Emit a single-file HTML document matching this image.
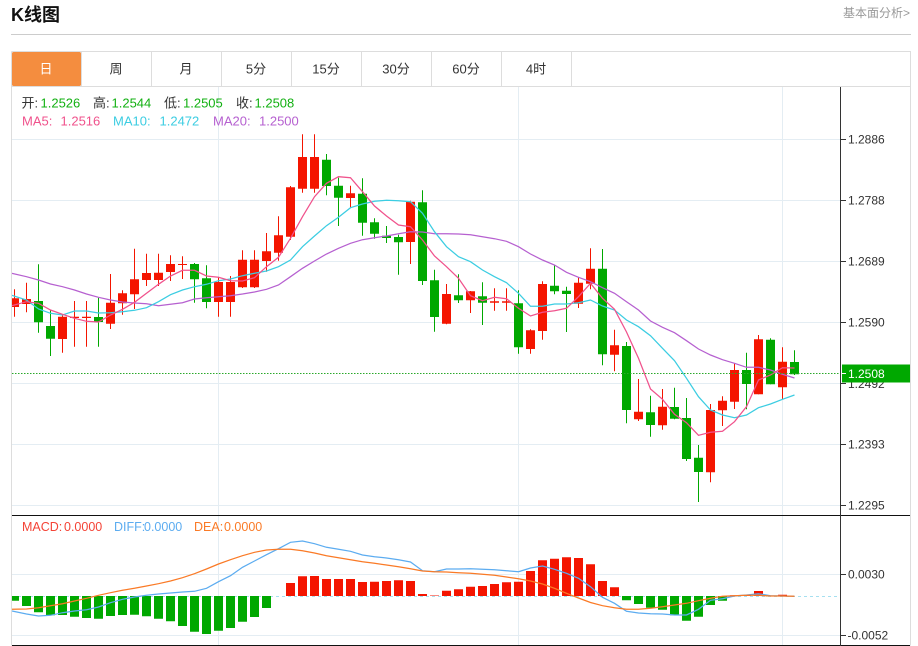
<!DOCTYPE html>
<html lang="zh">
<head>
<meta charset="utf-8">
<title>K线图</title>
<style>
html,body{margin:0;padding:0;background:#fff;width:918px;height:646px;overflow:hidden}
svg{display:block;font-family:"Liberation Sans","Noto Sans CJK SC",sans-serif}
</style>
</head>
<body>
<svg width="918" height="646" viewBox="0 0 918 646" xmlns="http://www.w3.org/2000/svg">
<defs>
<clipPath id="c"><rect x="12" y="87" width="828" height="559"/></clipPath>
</defs>
<!-- header -->
<text x="11" y="21" font-size="18" font-weight="bold" fill="#111">K线图</text>
<text x="910" y="17" font-size="12" fill="#999" text-anchor="end">基本面分析&gt;</text>
<path d="M11 34.5H911" stroke="#ccc" stroke-width="1"/>
<!-- frame -->
<path d="M11.5 51.5H910.5V645.5M11.5 51.5V645.5M11.5 86.5H910.5" fill="none" stroke="#ddd"/>
<path d="M81.5 52V86M151.5 52V86M221.5 52V86M291.5 52V86M361.5 52V86M431.5 52V86M501.5 52V86M571.5 52V86" stroke="#ddd"/>
<rect x="12" y="52" width="69" height="34" rx="1.5" fill="#f48d3f"/>
<g font-size="13" fill="#333" text-anchor="middle">
<text x="46" y="73.5" fill="#fff">日</text>
<text x="116" y="73.5">周</text>
<text x="186" y="73.5">月</text>
<text x="256" y="73.5">5分</text>
<text x="326" y="73.5">15分</text>
<text x="396" y="73.5">30分</text>
<text x="466" y="73.5">60分</text>
<text x="536" y="73.5">4时</text>
</g>
<!-- grid -->
<path d="M12 139.5H840M12 200.5H840M12 261.5H840M12 322.5H840M12 383.5H840M12 444.5H840M12 505.5H840M12 574.5H840M12 635.5H840M218.5 87V645M518.5 87V645M782.5 87V645" stroke="#e4edf3" fill="none"/>
<g clip-path="url(#c)">
<!-- red wicks -->
<path fill="none" stroke="#f41500" d="M14.5 289.3V316.7M26.5 282.7V312.3M62.5 315V352.7M74.5 301V346.7M86.5 301V346.7M110.5 274V329M122.5 290.3V314.7M134.5 248.7V309M146.5 253.7V286M158.5 253.7V286M170.5 255.3V281M182.5 256.3V279M218.5 277V316.7M230.5 276V316.7M242.5 250.3V288M254.5 250.3V288M266.5 233V271.7M278.5 216.3V260.7M290.5 186V240M302.5 134.3V192.7M314.5 134.3V192.7M350.5 185.7V208M410.5 200.7V264M446.5 284V324.3M470.5 291V313M494.5 288.3V310.7M506.5 288.3V310.7M530.5 329.3V353.7M542.5 281.3V339.7M578.5 277.3V308M590.5 248.3V289.3M614.5 329.7V371.3M638.5 379V421M662.5 389V429.7M710.5 404V482.3M722.5 396.3V426M734.5 363.3V409M758.5 335V394.3M782.5 347.3V399"/>
<!-- red bodies -->
<path fill="#f41500" d="M10 298.3h9V307h-9zM22 299h9v5h-9zM58 316.7h9V339h-9zM70 316.7h9V318h-9zM82 316.7h9V318h-9zM106 302.7h9V323.7h-9zM118 293.3h9V303.3h-9zM130 279.3h9V294.3h-9zM142 273h9V280h-9zM154 272.7h9V280h-9zM166 264h9V272h-9zM178 264h9V265h-9zM214 282h9V302h-9zM226 282h9V302h-9zM238 259.7h9V287.3h-9zM250 259.7h9V287.3h-9zM262 251.3h9V261h-9zM274 235.3h9V252.7h-9zM286 187.3h9V236.7h-9zM298 157h9V188.7h-9zM310 157h9V188.7h-9zM346 193.3h9V198h-9zM406 201.7h9V242h-9zM442 294h9V323.7h-9zM466 291.3h9V300.3h-9zM490 301.3h9V302.7h-9zM502 301.3h9V302.7h-9zM526 330.3h9V349h-9zM538 284h9V331h-9zM574 282.7h9V303.7h-9zM586 268.7h9V283.7h-9zM610 345.3h9V354.7h-9zM634 411.7h9V419.3h-9zM658 406.7h9V425.3h-9zM706 410h9V472.3h-9zM718 400.7h9V410.3h-9zM730 370h9V401.7h-9zM754 339.3h9V394.3h-9zM778 361.7h9V387.3h-9z"/>
<!-- green wicks -->
<path fill="none" stroke="#00a800" d="M38.5 264.3V332.7M50.5 310V356M98.5 297.7V346.7M194.5 263V302.7M206.5 265.3V308.3M326.5 154V195.3M338.5 177.7V226M362.5 178.3V235.7M374.5 218.3V238.7M386.5 226V243M398.5 234.7V274.7M422.5 190.3V285M434.5 269.7V331.7M458.5 274.3V303M482.5 282.3V325M518.5 290.3V353.7M554.5 264.7V294.3M566.5 286.7V332M602.5 249V365.3M626.5 342V423.3M650.5 395.7V436.7M674.5 387.7V419.3M686.5 398V461M698.5 445V502M746.5 352.7V409.3M770.5 338.3V384.3M794.5 350.3V375"/>
<!-- green bodies -->
<path fill="#00a800" d="M34 301h9V322.3h-9zM46 326h9V338.7h-9zM94 317h9V322h-9zM190 264h9V279.3h-9zM202 278.3h9V302h-9zM322 159.7h9V186h-9zM334 185.7h9V197.7h-9zM358 193.7h9V222.7h-9zM370 222.3h9V233.7h-9zM382 235.7h9V238h-9zM394 237h9V242.3h-9zM418 202.3h9V281h-9zM430 280.3h9V317h-9zM454 295.3h9V300.3h-9zM478 296.3h9V302.7h-9zM514 303.3h9V347.3h-9zM550 285.7h9V291.3h-9zM562 290.7h9V294h-9zM598 268.7h9V354.3h-9zM622 346h9V410h-9zM646 412.3h9V425h-9zM670 407h9V418.7h-9zM682 418h9V459h-9zM694 457.7h9V472h-9zM742 370h9V384h-9zM766 339.7h9V384.3h-9zM790 362h9V374.3h-9z"/>
<!-- MA20 -->
<polyline fill="none" stroke="#b660d0" stroke-width="1.25" points="12,273.3 26.5,276.7 38.5,280 50.5,284 62.5,286.7 74.5,290 86.5,294 98.5,297.3 110.5,300 122.5,302 134.5,303 146.5,303.7 158.5,305.7 170.5,304.3 182.5,302.7 194.5,299 206.5,297.7 218.5,296.7 230.5,295.7 242.5,294 254.5,292 266.5,289.3 278.5,285 290.5,276.7 302.5,268.3 314.5,261 326.5,254 338.5,248.3 350.5,243.3 362.5,239.7 374.5,237.7 386.5,236 398.5,233.7 410.5,231.7 422.5,232 434.5,233.7 446.5,233.7 458.5,234 470.5,234.7 482.5,236.7 494.5,238.7 506.5,241.3 518.5,246.7 530.5,254 542.5,260 554.5,265 566.5,272.3 578.5,277.3 590.5,281.7 602.5,287.7 614.5,293.3 626.5,301.7 638.5,310 650.5,321 662.5,327.3 674.5,332.7 686.5,340.7 698.5,349 710.5,355 722.5,359.7 734.5,363.3 746.5,367.3 758.5,367.3 770.5,370 782.5,374.3 794.5,378"/>
<!-- MA10 -->
<polyline fill="none" stroke="#3ccde2" stroke-width="1.25" points="12,295.3 26.5,300 38.5,309 50.5,313.3 62.5,315 74.5,311 86.5,311 98.5,313 110.5,312.7 122.5,311.7 134.5,310.3 146.5,307.7 158.5,301.7 170.5,294.7 182.5,290 194.5,286.7 206.5,284.3 218.5,280.7 230.5,279 242.5,275.7 254.5,273.3 266.5,271 278.5,266.7 290.5,260 302.5,246.7 314.5,236 326.5,225.7 338.5,217.3 350.5,207.7 362.5,204 374.5,201.3 386.5,200.3 398.5,200.7 410.5,201.7 422.5,213.3 434.5,231.7 446.5,246.7 458.5,256.7 470.5,261.7 482.5,270 494.5,276.7 506.5,282.7 518.5,293.3 530.5,306.3 542.5,306.3 554.5,304 566.5,304 578.5,302.7 590.5,300 602.5,306 614.5,310 626.5,320 638.5,326.7 650.5,335.7 662.5,348.3 674.5,360.7 686.5,378.3 698.5,396.7 710.5,410 722.5,415 734.5,417.7 746.5,415 758.5,407.7 770.5,404 782.5,399.3 794.5,395"/>
<!-- MA5 -->
<polyline fill="none" stroke="#f0528c" stroke-width="1.25" points="12,305.7 26.5,301.7 38.5,303.3 50.5,310 62.5,314.3 74.5,318.3 86.5,321.3 98.5,322 110.5,315 122.5,309.3 134.5,302.3 146.5,293.3 158.5,284.3 170.5,276 182.5,270.3 194.5,270.3 206.5,276 218.5,277.3 230.5,280.7 242.5,281 254.5,277.7 266.5,266.7 278.5,257.3 290.5,238.3 302.5,216.7 314.5,196.7 326.5,183.3 338.5,176.7 350.5,177.7 362.5,191.7 374.5,206 386.5,216 398.5,225 410.5,226.7 422.5,240 434.5,256 446.5,266.7 458.5,278.3 470.5,295.7 482.5,300.7 494.5,297.3 506.5,298.7 518.5,308.3 530.5,316 542.5,312.3 554.5,310.7 566.5,308.3 578.5,296.7 590.5,283.3 602.5,298.3 614.5,309.3 626.5,332 638.5,358.3 650.5,389 662.5,399.3 674.5,414.3 686.5,422.7 698.5,435.3 710.5,432.3 722.5,431.3 734.5,421.7 746.5,406.7 758.5,380 770.5,375 782.5,367.7 794.5,368"/>
<!-- last price dotted -->
<path d="M12 373.5H840" stroke="#2aa82a" stroke-dasharray="1.5 1.5" fill="none"/>
<!-- MACD zero -->
<path d="M12 596.5H840" stroke="#a6e0f0" stroke-dasharray="3 3" fill="none"/>
<!-- MACD green -->
<path fill="#00a800" d="M10 596h9V600.7h-9zM22 596h9V606h-9zM34 596h9V612.3h-9zM46 596h9V615.3h-9zM58 596h9V615h-9zM70 596h9V616.7h-9zM82 596h9V618h-9zM94 596h9V618.7h-9zM106 596h9V616h-9zM118 596h9V615h-9zM130 596h9V614.7h-9zM142 596h9V616.3h-9zM154 596h9V618.7h-9zM166 596h9V621.3h-9zM178 596h9V626h-9zM190 596h9V631.7h-9zM202 596h9V634h-9zM214 596h9V630.7h-9zM226 596h9V628h-9zM238 596h9V621.7h-9zM250 596h9V617h-9zM262 596h9V608h-9zM622 596h9V600.3h-9zM634 596h9V604h-9zM646 596h9V607.7h-9zM658 596h9V609.7h-9zM670 596h9V615.3h-9zM682 596h9V620.7h-9zM694 596h9V616.7h-9zM706 596h9V605h-9zM718 596h9V600.7h-9zM766 596h9V596.4h-9z"/>
<!-- MACD red -->
<path fill="#f41500" d="M286 583h9V596h-9zM298 576.3h9V596h-9zM310 576h9V596h-9zM322 579h9V596h-9zM334 579h9V596h-9zM346 579h9V596h-9zM358 582h9V596h-9zM370 581.7h9V596h-9zM382 581h9V596h-9zM394 580.3h9V596h-9zM406 581h9V596h-9zM418 594h9V596h-9zM430 595.5h9V596h-9zM442 590.7h9V596h-9zM454 589.3h9V596h-9zM466 586.7h9V596h-9zM478 586h9V596h-9zM490 584h9V596h-9zM502 582.3h9V596h-9zM514 581.7h9V596h-9zM526 571h9V596h-9zM538 560.3h9V596h-9zM550 558.7h9V596h-9zM562 557.3h9V596h-9zM574 558h9V596h-9zM586 564.3h9V596h-9zM598 581h9V596h-9zM610 587.3h9V596h-9zM730 595.3h9V596h-9zM742 595.5h9V596h-9zM754 591h9V596h-9zM778 594.7h9V596h-9z"/>
<!-- DIFF -->
<polyline fill="none" stroke="#5cacf0" stroke-width="1.25" points="12,611 26.5,614 38.5,616 50.5,615.3 62.5,612.7 74.5,611 86.5,609.7 98.5,607 110.5,602.7 122.5,599.3 134.5,597 146.5,595.3 158.5,594 170.5,593 182.5,592 194.5,591.3 206.5,588.3 218.5,581.7 230.5,575.7 242.5,567.3 254.5,561 266.5,554.7 278.5,548.7 290.5,542.3 302.5,541 314.5,543.7 326.5,547.3 338.5,549.3 350.5,551.3 362.5,555 374.5,556.7 386.5,558 398.5,559.7 410.5,562 422.5,570.7 434.5,571.7 446.5,569 458.5,569 470.5,568.7 482.5,569.3 494.5,569.7 506.5,570.7 518.5,571.7 530.5,568 542.5,566 554.5,569.3 566.5,573.3 578.5,578.3 590.5,586.7 602.5,597.3 614.5,603.3 626.5,611.3 638.5,613 650.5,613.7 662.5,614 674.5,615 686.5,615 698.5,609.3 710.5,600.3 722.5,598.7 734.5,596 746.5,595 758.5,593.7 770.5,595.7 782.5,596 794.5,596.3"/>
<!-- DEA -->
<polyline fill="none" stroke="#fa7a26" stroke-width="1.25" points="12,609.3 26.5,609 38.5,607.7 50.5,605.7 62.5,603.7 74.5,601 86.5,598.3 98.5,595.3 110.5,592.7 122.5,590.3 134.5,588.3 146.5,586 158.5,583.7 170.5,581 182.5,577.7 194.5,573.7 206.5,569 218.5,564 230.5,559.7 242.5,555.7 254.5,552.3 266.5,550 278.5,549.3 290.5,549.3 302.5,550.7 314.5,553 326.5,555.7 338.5,557.7 350.5,559.7 362.5,561.7 374.5,563.3 386.5,565 398.5,566.7 410.5,568.7 422.5,571 434.5,571.7 446.5,572 458.5,572.7 470.5,573.3 482.5,574.3 494.5,575.3 506.5,577 518.5,578.7 530.5,581 542.5,584 554.5,588.3 566.5,593.3 578.5,598 590.5,602.5 602.5,605.7 614.5,607.7 626.5,609.3 638.5,609.3 650.5,608.3 662.5,606.7 674.5,605 686.5,603.3 698.5,600.7 710.5,598.3 722.5,596.3 734.5,595.7 746.5,595.3 758.5,595.3 770.5,596 782.5,596 794.5,596.3"/>
</g>
<!-- separators and axis -->
<path d="M12 515.5H910M12 645.5H910" stroke="#111" fill="none"/>
<path d="M840.5 87V646" stroke="#333" fill="none"/>
<path d="M841 139.5h5M841 200.5h5M841 261.5h5M841 322.5h5M841 383.5h5M841 444.5h5M841 505.5h5M841 574.5h5M841 635.5h5" stroke="#333" fill="none"/>
<g font-size="12" fill="#333">
<text x="848" y="143.5">1.2886</text>
<text x="848" y="204.5">1.2788</text>
<text x="848" y="265.5">1.2689</text>
<text x="848" y="326.5">1.2590</text>
<text x="848" y="388">1.2492</text>
<text x="848" y="448.5">1.2393</text>
<text x="848" y="509.5">1.2295</text>
<text x="848" y="578.5">0.0030</text>
<text x="847.5" y="639.5">-0.0052</text>
</g>
<rect x="842" y="364.5" width="68" height="18" fill="#00a800"/>
<path d="M842 373.5h4" stroke="#fff" fill="none"/>
<text x="848" y="378" font-size="12" fill="#fff">1.2508</text>
<!-- info text -->
<g font-size="13">
<text x="21.5" y="107.5" fill="#333">开:</text><text x="40.5" y="107.5" fill="#12b012">1.2526</text>
<text x="93" y="107.5" fill="#333">高:</text><text x="111.5" y="107.5" fill="#12b012">1.2544</text>
<text x="164" y="107.5" fill="#333">低:</text><text x="183" y="107.5" fill="#12b012">1.2505</text>
<text x="236" y="107.5" fill="#333">收:</text><text x="254.5" y="107.5" fill="#12b012">1.2508</text>
<text x="22" y="125.5" fill="#f0528c">MA5:</text><text x="60.5" y="125.5" fill="#f0528c">1.2516</text>
<text x="113" y="125.5" fill="#3ccde2">MA10:</text><text x="159.5" y="125.5" fill="#3ccde2">1.2472</text>
<text x="213" y="125.5" fill="#b660d0">MA20:</text><text x="259" y="125.5" fill="#b660d0">1.2500</text>
</g>
<g font-size="12.5">
<text x="22" y="531" fill="#f44336">MACD:</text><text x="64" y="531" fill="#f44336">0.0000</text>
<text x="114" y="531" fill="#5cacf0">DIFF:</text><text x="144" y="531" fill="#5cacf0">0.0000</text>
<text x="194" y="531" fill="#fa7a26">DEA:</text><text x="224" y="531" fill="#fa7a26">0.0000</text>
</g>
</svg>
</body>
</html>
